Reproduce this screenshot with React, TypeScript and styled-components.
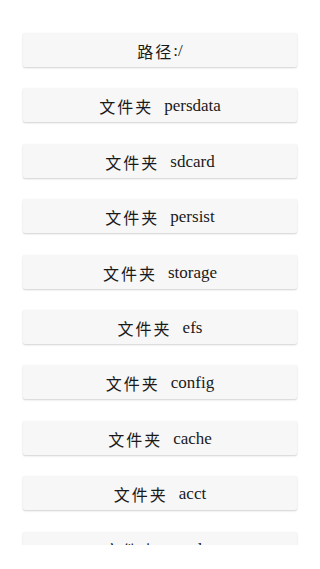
import React from 'react'
import styled, { createGlobalStyle } from 'styled-components'

const GlobalStyle = createGlobalStyle`
  html, body {
    margin: 0;
    padding: 0;
    background: #fff;
  }
  body {
    font-family: 'Liberation Serif', 'Noto Sans CJK SC', serif;
  }
`

const Page = styled.div`
  width: 320px;
  height: 569px;
  background: #fff;
`

const List = styled.div`
  height: 545px;
  overflow: hidden;
  padding: 33px 23px 0;
  box-sizing: border-box;
  display: flex;
  flex-direction: column;
  gap: 21.4px;
`

const Row = styled.div`
  flex: none;
  height: 34px;
  padding-top: 2px;
  box-sizing: border-box;
  background: #f7f7f7;
  border-radius: 2px;
  box-shadow: 0 1px 2px rgba(0, 0, 0, 0.18), 0 0 1px rgba(0, 0, 0, 0.06);
  display: flex;
  align-items: center;
  justify-content: center;
  font-size: 17px;
  color: #1a1a1a;
`

const Label = styled.span`
  font-family: 'Noto Sans CJK SC', sans-serif;
  font-size: 16px;
  letter-spacing: 2px;
`

const Name = styled.span`
  margin-left: 11px;
`

const folders = ['persdata', 'sdcard', 'persist', 'storage', 'efs', 'config', 'cache', 'acct', 'vendor']

export default function App() {
  return (
    <Page>
      <GlobalStyle />
      <List>
        <Row>
          <Label>路径</Label>:/
        </Row>
        {folders.map((f) => (
          <Row key={f}>
            <Label>文件夹</Label>
            <Name>{f}</Name>
          </Row>
        ))}
      </List>
    </Page>
  )
}
